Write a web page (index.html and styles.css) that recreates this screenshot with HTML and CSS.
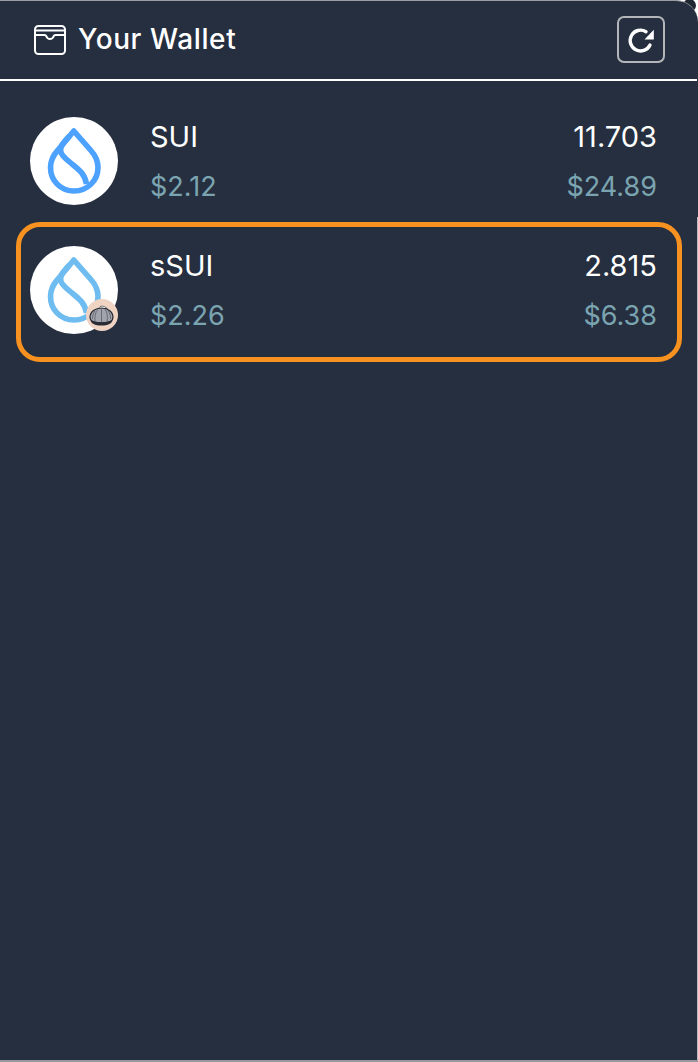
FILE: index.html
```html
<!DOCTYPE html>
<html lang="en">
<head>
<meta charset="utf-8">
<title>Your Wallet</title>
<link rel="stylesheet" href="styles.css">
</head>
<body>
<span class="corner-dot"></span>
<main class="panel">
  <header class="head">
    <div class="title">
      <svg class="wallet" viewBox="0 0 32 30" fill="none" stroke="#fff" stroke-width="2" stroke-linecap="round" stroke-linejoin="round">
        <rect x="1" y="1" width="30" height="28" rx="3.500"/>
        <path d="M1 5.500h30"/>
        <path d="M1 10h9.500c1 0 1.600.6 2 1.500.6 1.600 1.800 2.500 3.500 2.500s2.900-.9 3.500-2.500c.4-.9 1-1.500 2-1.500H31"/>
      </svg>
      <span class="title-text">Your Wallet</span>
    </div>
    <button class="refresh" aria-label="Refresh">
      <svg viewBox="0 0 28 28" width="28" height="28" fill="none">
        <path d="M23 19A10.400 10.400 0 1 1 19 5.700" stroke="#fff" stroke-width="3.400" stroke-linecap="round"/>
        <path d="M26.800 3.800V13.500H17.500Z" fill="#fff"/>
      </svg>
    </button>
  </header>
  <section class="list">
    <article class="row">
      <div class="avatar">
        <svg class="drop" viewBox="0 0 88 88" fill="none" stroke="#4da2ff" stroke-width="5.600" stroke-linejoin="round">
          <path d="M43.800 14L60.500 33C65.500 38.500 68 44 68 50.500C68 63.500 57.500 74 44 74C30.500 74 20.500 63.500 20.500 50.500C20.500 44 23 38.500 28 33Z"/>
          <path d="M39.500 19C33 26 29 30.500 31 35.500C33 40.500 38 43.500 42 47C48 52 54.500 56 56.500 67"/>
        </svg>
      </div>
      <div class="info">
        <div class="name">SUI</div>
        <div class="price">$2.12</div>
      </div>
      <div class="amounts">
        <div class="amount">11.703</div>
        <div class="value">$24.89</div>
      </div>
    </article>
    <article class="row row-active">
      <div class="avatar">
        <svg class="drop" viewBox="0 0 88 88" fill="none" stroke="#6fbcf0" stroke-width="5.600" stroke-linejoin="round">
          <path d="M43.800 14L60.500 33C65.500 38.500 68 44 68 50.500C68 63.500 57.500 74 44 74C30.500 74 20.500 63.500 20.500 50.500C20.500 44 23 38.500 28 33Z"/>
          <path d="M39.500 19C33 26 29 30.500 31 35.500C33 40.500 38 43.500 42 47C48 52 54.500 56 56.500 67"/>
        </svg>
        <span class="badge">
          <svg viewBox="0 0 32 32" width="32" height="32">
            <path d="M12.500 9.500Q15 4.500 21.500 9.500Z" fill="#f2f2f4" stroke="#4a4d55" stroke-width=".7"/>
            <path d="M4 18.500C4 12.500 9.500 9 15.500 9C21.500 9 27 12.500 27 18.500C27 22 24 24 15.500 24C7 24 4 22 4 18.500Z" fill="#a1a4ac" stroke="#23262d" stroke-width="1.200"/>
            <path d="M9 22C8.500 17 9.500 13 12 10M15.500 23V9.500M21 22C22 17 21 13 19 10M6.500 20C6.500 17 7 14 9 12M24.500 20C24.500 17 24 14 22 12" stroke="#5a5d66" stroke-width=".8" fill="none"/>
            <path d="M4.500 20.500C8 24 23 24 26.500 20.500C26.500 24.500 22 26.500 15.500 26.500C9 26.500 4.500 24.500 4.500 20.500Z" fill="#2a2d34"/>
          </svg>
        </span>
      </div>
      <div class="info">
        <div class="name">sSUI</div>
        <div class="price">$2.26</div>
      </div>
      <div class="amounts">
        <div class="amount">2.815</div>
        <div class="value">$6.38</div>
      </div>
    </article>
  </section>
</main>
</body>
</html>
```
FILE: styles.css
```css
* { box-sizing: border-box; }
html, body { margin: 0; height: 100%; background: #fff; }
body { overflow: hidden; position: relative; font-family: "Inter", "Liberation Sans", sans-serif; }
.corner-dot {
  position: absolute;
  top: -1px;
  right: 2px;
  width: 13px;
  height: 13px;
  border-radius: 50%;
  background: #1f2733;
}
.panel {
  position: relative;
  height: 1062px;
  background: #262f3f;
  border-top: 1px solid #9a9ca2;
  border-bottom: 2px solid #96989e;
  border-top-right-radius: 22px;
  overflow: hidden;
}
.panel::after {
  content: "";
  position: absolute;
  top: 216px;
  right: 0;
  bottom: 0;
  width: 1px;
  background: #b9bbc0;
}
.head {
  height: 80px;
  display: flex;
  align-items: center;
  justify-content: space-between;
  padding: 0 32px 1px 34px;
  border-bottom: 2px solid #fff;
  margin-right: 1px;
}
.title { display: flex; align-items: center; gap: 12px; }
.wallet { width: 32px; height: 30px; display: block; }
.title-text { color: #fff; font-size: 28px; font-weight: 500; line-height: 34px; letter-spacing: .6px; padding-bottom: 2px; }
.refresh {
  width: 48px;
  height: 47px;
  padding: 0;
  display: flex;
  align-items: center;
  justify-content: center;
  background: transparent;
  border: 2px solid #b4b6ba;
  border-radius: 7px;
}
.list { padding: 12px 16px 0 16px; display: flex; flex-direction: column; }
.row {
  height: 129px;
  display: flex;
  align-items: flex-start;
  padding: 19px 20px 0 9px;
  border: 5px solid transparent;
  border-radius: 24px;
}
.row-active { height: 140px; border-color: #f7911f; }
.avatar {
  position: relative;
  width: 88px;
  height: 88px;
  flex: none;
  border-radius: 50%;
  background: #fff;
}
.drop { width: 88px; height: 88px; display: block; }
.badge {
  position: absolute;
  right: 0;
  bottom: 3px;
  width: 32px;
  height: 32px;
  border-radius: 50%;
  background: #efd3c3;
}
.badge svg { display: block; }
.info { margin-left: 32px; flex: 1; }
.amounts { text-align: right; }
.name, .amount { color: #fff; font-size: 29px; line-height: 36px; font-weight: 400; margin-top: 2px; }
.price, .value { color: #7ba4b1; font-size: 27px; line-height: 34px; margin-top: 15px; }
```
